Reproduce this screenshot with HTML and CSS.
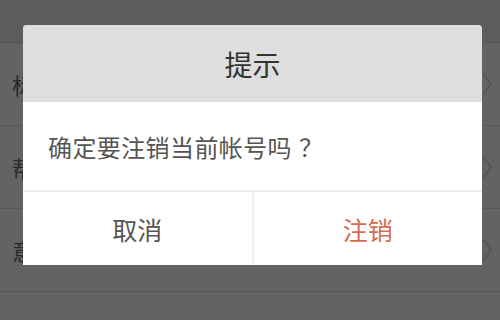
FILE: index.html
```html
<!DOCTYPE html>
<html lang="zh-CN">
<head>
<meta charset="utf-8">
<link rel="stylesheet" href="styles.css">
</head>
<body>
<div class="page">
  <div class="header"></div>
  <div class="row"><span class="label">标</span><svg class="chev" viewBox="0 0 10 24" width="10" height="24"><polyline points="1,1 9,12 1,23"/></svg></div>
  <div class="row"><span class="label">帮</span><svg class="chev" viewBox="0 0 10 24" width="10" height="24"><polyline points="1,1 9,12 1,23"/></svg></div>
  <div class="row"><span class="label">意</span><svg class="chev" viewBox="0 0 10 24" width="10" height="24"><polyline points="1,1 9,12 1,23"/></svg></div>
  <div class="row last"></div>
</div>
<div class="dialog">
  <div class="title">提示</div>
  <div class="message">确定要注销当前帐号吗<span class="q">？</span></div>
  <div class="actions">
    <div class="btn cancel">取消</div>
    <div class="btn confirm">注销</div>
  </div>
</div>
</body>
</html>
```
FILE: styles.css
```css
html, body {
  margin: 0;
  padding: 0;
}
body {
  width: 500px;
  height: 320px;
  overflow: hidden;
  background: #636363;
  font-family: "Noto Sans CJK SC", "Noto Sans", sans-serif;
  position: relative;
}
.page {
  height: 320px;
  display: flex;
  flex-direction: column;
}
.header {
  height: 42px;
  background: #5c5c5c;
  border-bottom: 1px solid #575757;
}
.row {
  height: 82px;
  border-bottom: 1px solid #575757;
  display: flex;
  align-items: center;
  justify-content: space-between;
  padding: 0 8px 0 12px;
}
.row.last {
  flex: 1;
  height: auto;
  border-bottom: none;
}
.label {
  font-size: 22px;
  color: #2a2a2a;
}
.chev polyline {
  fill: none;
  stroke: #565656;
  stroke-width: 1.6;
}
.dialog {
  position: absolute;
  left: 23px;
  top: 25px;
  width: 459px;
  height: 240px;
  background: #fff;
  border-radius: 4px 4px 0 0;
  overflow: hidden;
  display: flex;
  flex-direction: column;
}
.title {
  height: 77px;
  background: #dedede;
  color: #333;
  font-size: 28px;
  display: flex;
  align-items: center;
  justify-content: center;
}
.message {
  height: 88px;
  border-bottom: 2px solid #efefef;
  display: flex;
  align-items: center;
  padding-left: 25px;
  font-size: 24px;
  letter-spacing: 0.4px;
  color: #555;
}
.q {
  margin-left: 7px;
}
.actions {
  flex: 1;
  display: flex;
}
.btn {
  flex: 1;
  display: flex;
  align-items: center;
  justify-content: center;
  font-size: 25px;
}
.cancel {
  color: #555;
  border-right: 2px solid #efefef;
}
.confirm {
  color: #d66a50;
}
```
